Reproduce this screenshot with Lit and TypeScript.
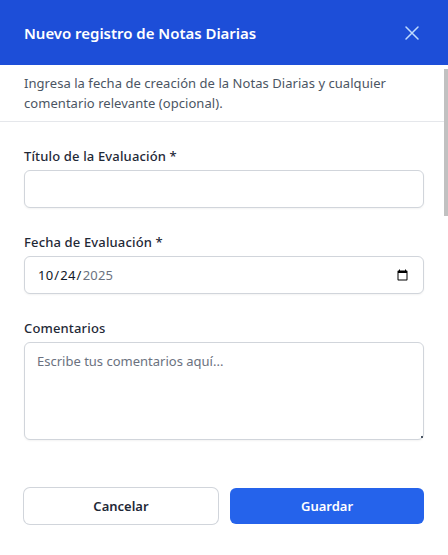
import { LitElement, html, css } from "lit";
import { customElement } from "lit/decorators.js";

@customElement("app-root")
export class AppRoot extends LitElement {
  static styles = css`
    :host {
      display: block;
      width: 448px;
      height: 555px;
      background: #fff;
      font-family: "Noto Sans", "Liberation Sans", sans-serif;
      color: #1f2937;
      position: relative;
      overflow: hidden;
    }
    * { box-sizing: border-box; }
    .header {
      height: 65px;
      background: #1d4ed8;
      display: flex;
      align-items: center;
      justify-content: space-between;
      padding: 0 24px;
    }
    .title { margin: 0; font-size: 15px; font-weight: 600; line-height: 24px; letter-spacing: -0.03px; color: #fff; }
    .close { width: 24px; height: 24px; padding: 0; border: 0; background: none; color: #bfdbfe; display: flex; }
    .close svg { width: 24px; height: 24px; }
    .intro {
      margin: 0;
      padding: 9px 24px 8px;
      border-bottom: 1px solid #e5e7eb;
      font-size: 13px;
      line-height: 19.5px;
      letter-spacing: 0.05px;
      color: #4b5563;
    }
    .form { padding: 24px 24px 0; display: flex; flex-direction: column; gap: 24px; }
    .field { display: flex; flex-direction: column; gap: 4px; position: relative; }
    label { font-size: 13px; line-height: 20px; font-weight: 500; letter-spacing: 0.15px; color: #1f2937; }
    .control {
      width: 100%;
      height: 38px;
      border: 1px solid #d1d5db;
      border-radius: 6px;
      background: #fff;
      box-shadow: 0 1px 2px rgba(0, 0, 0, 0.05);
      padding: 8px 12px;
      margin: 0;
      font: 13px/20px "Noto Sans", "Liberation Sans", sans-serif;
      color: #111827;
      outline: none;
      display: block;
    }
    input[type="date"] { letter-spacing: 0.2px; }
    input[type="date"]::-webkit-datetime-edit-year-field { color: #6b7280; }
    textarea.control { height: 98px; resize: none; }
    textarea::placeholder { color: #6b7280; opacity: 1; }
    .grip {
      position: absolute;
      right: 1px;
      bottom: 2px;
      width: 2px;
      height: 2px;
      background: #4b5563;
    }
    .actions { display: flex; gap: 12px; padding: 48px 24px 0; }
    .btn {
      flex: 1;
      height: 36px;
      border-radius: 6px;
      font: 600 13px/20px "Noto Sans", "Liberation Sans", sans-serif;
      border: 0;
      padding: 0;
    }
    .cancel { background: #fff; color: #1f2937; box-shadow: 0 0 0 1px #d1d5db; }
    .save { background: #2563eb; color: #fff; }
    .thumb {
      position: absolute;
      right: 0;
      top: 69px;
      width: 4px;
      height: 147px;
      background: #c1c1c1;
    }
  `;

  render() {
    return html`
      <header class="header">
        <h2 class="title">Nuevo registro de Notas Diarias</h2>
        <button class="close" aria-label="Cerrar">
          <svg viewBox="0 0 24 24" fill="none" stroke="currentColor" stroke-width="1.5" stroke-linecap="round">
            <path d="M6 6l12 12M18 6L6 18" />
          </svg>
        </button>
      </header>
      <p class="intro">Ingresa la fecha de creación de la Notas Diarias y cualquier comentario relevante (opcional).</p>
      <form class="form">
        <div class="field">
          <label for="t">Título de la Evaluación *</label>
          <input id="t" class="control" type="text" />
        </div>
        <div class="field">
          <label for="d">Fecha de Evaluación *</label>
          <input id="d" class="control" type="date" value="2025-10-24" />
        </div>
        <div class="field">
          <label for="c">Comentarios</label>
          <textarea id="c" class="control" placeholder="Escribe tus comentarios aquí..."></textarea>
          <span class="grip"></span>
        </div>
      </form>
      <div class="actions">
        <button class="btn cancel">Cancelar</button>
        <button class="btn save">Guardar</button>
      </div>
      <div class="thumb"></div>
    `;
  }
}
